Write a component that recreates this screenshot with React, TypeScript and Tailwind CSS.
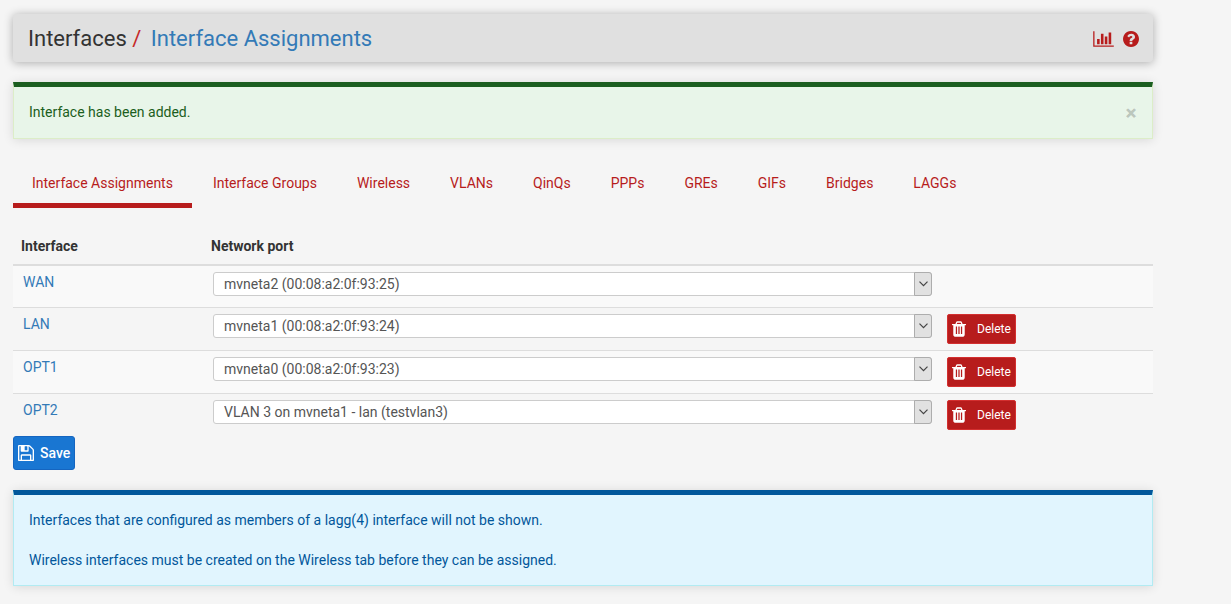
import React from 'react';

interface Assignment {
  name: string;
  port: string;
  removable: boolean;
}

const tabs = [
  'Interface Assignments',
  'Interface Groups',
  'Wireless',
  'VLANs',
  'QinQs',
  'PPPs',
  'GREs',
  'GIFs',
  'Bridges',
  'LAGGs',
];

const assignments: Assignment[] = [
  { name: 'WAN', port: 'mvneta2 (00:08:a2:0f:93:25)', removable: false },
  { name: 'LAN', port: 'mvneta1 (00:08:a2:0f:93:24)', removable: true },
  { name: 'OPT1', port: 'mvneta0 (00:08:a2:0f:93:23)', removable: true },
  { name: 'OPT2', port: 'VLAN 3 on mvneta1 - lan (testvlan3)', removable: true },
];

export default function App() {
  return (
    <div className="min-h-screen bg-[#f5f5f5] pt-[14px] pb-[18px] pl-[13px] pr-[78px] font-['Roboto','Liberation_Sans',sans-serif] text-sm leading-5 text-[#333]">
      <header className="flex h-12 items-center justify-between rounded bg-[#e0e0e0] pt-0.5 pr-[14px] pl-[15px] shadow-[0_1px_10px_rgba(0,0,0,0.3)]">
        <h1 className="text-[22px] leading-6">
          Interfaces <span className="mr-1 text-[#c62828]">/</span>{' '}
          <a href="#assignments" className="text-[#337ab7]">Interface Assignments</a>
        </h1>
        <div className="flex items-center gap-[9px] text-[#b71c1c]">
          <a href="#status" aria-label="Status"><ChartIcon /></a>
          <a href="#help" aria-label="Help"><HelpIcon /></a>
        </div>
      </header>

      <div role="alert" className="mt-5 flex items-start justify-between border border-t-[5px] border-[#dcedc8] border-t-[#1b5e20] bg-[#e8f5e9] p-[15px] text-[#1b5e20] shadow-[0_1px_10px_rgba(0,0,0,0.12)]">
        <p>Interface has been added.</p>
        <button type="button" aria-label="Close" className="mt-px h-5 w-3 text-[21px] leading-5 font-black text-black/20">×</button>
      </div>

      <nav className="mt-5 flex gap-0.5">
        {tabs.map((tab, i) => (
          <a
            key={tab}
            href="#tab"
            className={`border-b-[5px] px-[19px] pt-[14px] pb-[10px] text-[#b71c1c] ${i === 0 ? 'border-[#b71c1c]' : 'border-transparent'}`}
          >
            {tab}
          </a>
        ))}
      </nav>

      <table className="mt-6 w-full table-fixed border-collapse">
        <thead>
          <tr className="border-b-2 border-[#ddd] text-left">
            <th className="w-[190px] px-2 pt-1 pb-2 font-bold">Interface</th>
            <th className="px-2 pt-1 pb-2 font-bold">Network port</th>
            <th className="w-[213px]"></th>
          </tr>
        </thead>
        <tbody>
          {assignments.map((item) => (
            <AssignmentRow key={item.name} item={item} />
          ))}
        </tbody>
      </table>

      <button type="button" className="flex h-[34px] items-center gap-1.5 rounded-[3px] border border-[#1565c0] bg-[#1976d2] px-1 font-medium text-white">
        <SaveIcon />
        Save
      </button>

      <div className="mt-5 space-y-5 border border-t-[5px] border-[#b2ebf2] border-t-[#01579b] bg-[#e1f5fe] p-[15px] text-[#01579b] shadow-[0_1px_10px_rgba(0,0,0,0.12)]">
        <p>Interfaces that are configured as members of a lagg(4) interface will not be shown.</p>
        <p>Wireless interfaces must be created on the Wireless tab before they can be assigned.</p>
      </div>
    </div>
  );
}

function AssignmentRow({ item }: { item: Assignment }) {
  return (
    <tr className="h-[43px] border-t border-[#ddd] align-top first:h-[42px] odd:bg-[#f9f9f9]">
      <td className="px-[10px] pt-1.5">
        <a href="#interface" className="text-[#337ab7]">{item.name}</a>
      </td>
      <td className="pt-1.5 pr-2 pl-[10px]">
        <div className="relative">
          <select
            aria-label={`${item.name} network port`}
            className="block h-6 w-full appearance-none rounded-[3px] border border-[#ccc] bg-white pl-[10px] text-sm leading-5 text-[#555]"
          >
            <option>{item.port}</option>
          </select>
          <span className="pointer-events-none absolute inset-y-0 right-0 flex w-[18px] items-center justify-center rounded-r-[3px] border border-[#adadad] bg-[#e1e1e1]">
            <svg width="9" height="6" viewBox="0 0 9 6" fill="none" stroke="#444" strokeWidth="1.2">
              <path d="M.5.7l4 4 4-4" />
            </svg>
          </span>
        </div>
      </td>
      <td className="py-1.5 pl-[7px]">
        {item.removable && (
          <button type="button" className="flex h-[30px] items-center gap-[11px] rounded-[2px] border border-[#d32f2f] bg-[#b71c1c] px-1 text-xs text-white">
            <TrashIcon />
            Delete
          </button>
        )}
      </td>
    </tr>
  );
}

function ChartIcon() {
  return (
    <svg width="21" height="18" viewBox="0 0 2048 1792" fill="currentColor">
      <path d="M640 896v512h-256v-512h256zm384-512v1024h-256v-1024h256zm1024 1152v128h-2048v-1536h128v1408h1920zm-640-896v768h-256v-768h256zm384-384v1152h-256v-1152h256z" />
    </svg>
  );
}

function HelpIcon() {
  return (
    <svg width="16" height="16" viewBox="128 128 1536 1536" fill="currentColor">
      <path d="M1024 1376v-192q0-14-9-23t-23-9h-192q-14 0-23 9t-9 23v192q0 14 9 23t23 9h192q14 0 23-9t9-23zm256-672q0-88-55.5-163t-138.5-116-170-41q-243 0-371 213-15 24 8 42l132 100q7 6 19 6 16 0 25-12 53-68 86-92 34-24 86-24 48 0 85.5 26t37.5 59q0 38-20 61t-68 45q-63 28-115.5 86.5t-52.5 125.5v36q0 14 9 23t23 9h192q14 0 23-9t9-23q0-19 21.5-49.5t54.5-49.5q32-18 49-28.5t46-35 44.5-48 28-60.5 12.5-81zm384 192q0 209-103 385.5t-279.5 279.5-385.5 103-385.5-103-279.5-279.5-103-385.5 103-385.5 279.5-279.5 385.5-103 385.5 103 279.5 279.5 103 385.5z" />
    </svg>
  );
}

function TrashIcon() {
  return (
    <svg width="14" height="16" viewBox="192 128 1408 1536" fill="currentColor">
      <path d="M704 1376v-704q0-14-9-23t-23-9h-64q-14 0-23 9t-9 23v704q0 14 9 23t23 9h64q14 0 23-9t9-23zm256 0v-704q0-14-9-23t-23-9h-64q-14 0-23 9t-9 23v704q0 14 9 23t23 9h64q14 0 23-9t9-23zm256 0v-704q0-14-9-23t-23-9h-64q-14 0-23 9t-9 23v704q0 14 9 23t23 9h64q14 0 23-9t9-23zm-544-992h448l-48-117q-7-9-17-11h-317q-10 2-17 11zm928 32v64q0 14-9 23t-23 9h-96v948q0 83-47 143.5t-113 60.5h-832q-66 0-113-58.5t-47-141.5v-952h-96q-14 0-23-9t-9-23v-64q0-14 9-23t23-9h309l70-167q15-37 54-63t79-26h320q40 0 79 26t54 63l70 167h309q14 0 23 9t9 23z" />
    </svg>
  );
}

function SaveIcon() {
  return (
    <svg width="16" height="16" viewBox="128 128 1536 1536" fill="currentColor">
      <path d="M512 1536h768v-384h-768v384zm896 0h128v-896q0-14-10-38.5t-20-34.5l-281-281q-10-10-34-20t-39-10v416q0 40-28 68t-68 28h-576q-40 0-68-28t-28-68v-416h-128v1280h128v-416q0-40 28-68t68-28h832q40 0 68 28t28 68v416zm-384-928v-320q0-13-9.5-22.5t-22.5-9.5h-192q-13 0-22.5 9.5t-9.5 22.5v320q0 13 9.5 22.5t22.5 9.5h192q13 0 22.5-9.5t9.5-22.5zm640 32v928q0 40-28 68t-68 28h-1344q-40 0-68-28t-28-68v-1344q0-40 28-68t68-28h928q40 0 88 20t76 48l280 280q28 28 48 76t20 88z" />
    </svg>
  );
}
